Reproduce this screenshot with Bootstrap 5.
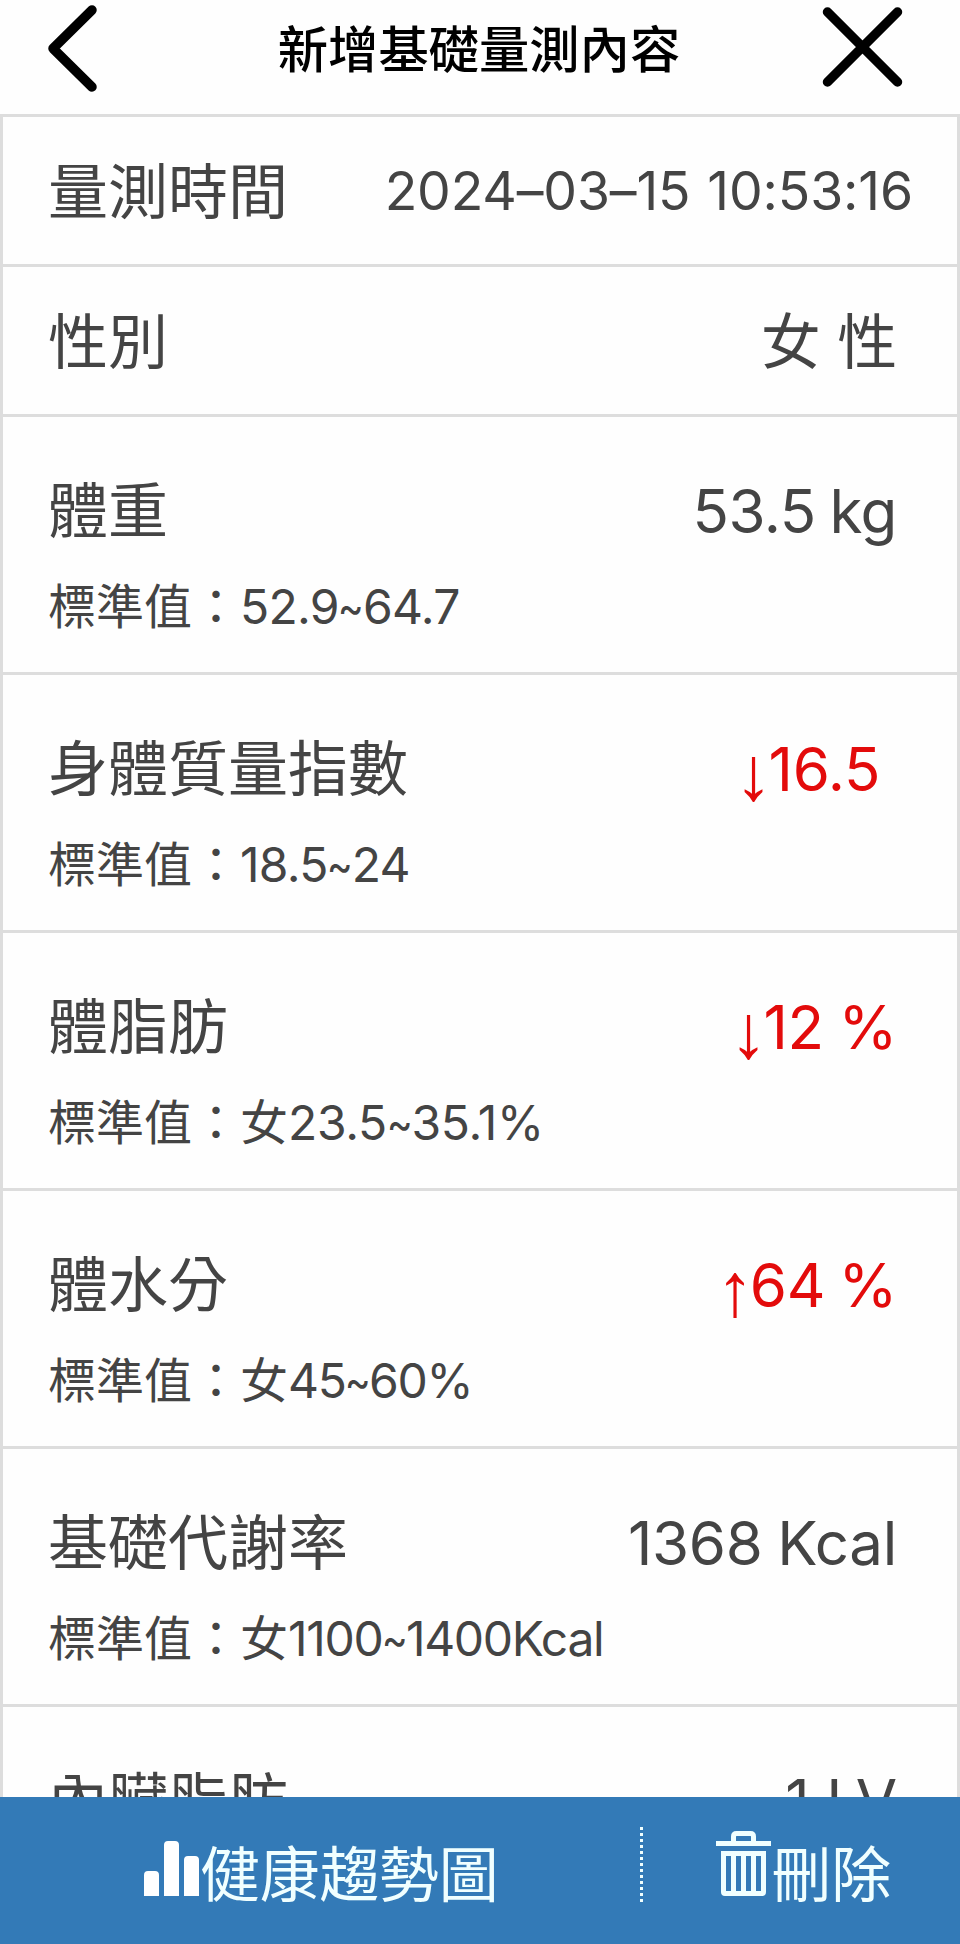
<!DOCTYPE html>
<html lang="zh-Hant">
<head>
<meta charset="utf-8">
<meta name="viewport" content="width=device-width, initial-scale=1">
<title>新增基礎量測內容</title>
<link href="https://cdn.jsdelivr.net/npm/bootstrap@5.3.0/dist/css/bootstrap.min.css" rel="stylesheet">
<style>
  body { font-family: Inter, "Noto Sans CJK TC", sans-serif; color: #444; background: #fefefe; }
  .screen { height: 1944px; }
  .topbar { height: 114px; padding: 0 57px 0 48px; color: #000; }
  .topbar h1 { font-size: 50.3px; font-weight: 500; line-height: 98px; margin-left: 38px; padding-top: 1px; }
  .topbar .btn { line-height: 0; }
  .measures { border: 3px solid #ddd; border-bottom: 0; min-height: 0; }
  .measure { height: 258px; padding: 49px 60px 0 45px; border-bottom: 3px solid #ddd; font-size: 60px; line-height: 90px; white-space: pre; }
  .measure.single { height: 150px; padding-top: 30px; }
  .reading { word-spacing: -2px; letter-spacing: -.3px; }
  .reading.plain { word-spacing: 0; letter-spacing: -.2px; }
  .reading.compact { word-spacing: -3px; letter-spacing: -.4px; }
  .norm { font-size: 48px; line-height: 72px; margin-top: 15px; letter-spacing: -.7px; }
  .norm b { font-weight: 400; letter-spacing: 0; }
  .norm i { display: inline-block; font-style: normal; margin: 0 -3.5px; transform: scaleX(.82); }
  .norm.tight { letter-spacing: -1.3px; }
  .norm.loose { letter-spacing: -.3px; }
  .stamp { font-size: 53.500px; margin-right: -16px; margin-top: -1.5px; word-spacing: 2px; letter-spacing: -.15px; }
  .alert-value { color: #e30b0b; }
  .arrow { font-family: "Liberation Serif", serif; font-size: 76px; line-height: 0; vertical-align: -9px; margin-right: -4px; }
  .actions { height: 147px; background: #337ab7; color: #f0ffff; font-size: 60px; }
  .actions a { color: inherit; line-height: 90px; padding-top: 33px; }
  .actions svg { margin-top: 1px; }
  .actions a span { letter-spacing: -.3px; }
  .trend { width: 640px; padding-left: 144px; }
  .divider { width: 3px; height: 75px; margin-top: 30px; background: repeating-linear-gradient(#f0ffff 0 3px, transparent 3px 6px); }
  .remove { padding-left: 73px; }
  .remove svg { margin-right: -1.5px; }
</style>
</head>
<body>
<div class="screen d-flex flex-column overflow-hidden">
  <header class="topbar d-flex justify-content-between align-items-start flex-shrink-0">
    <button class="btn p-0 border-0" aria-label="返回">
      <svg width="50" height="98" fill="none" stroke="#000" stroke-width="9.5" stroke-linecap="round" stroke-linejoin="round"><path d="M44 10 5 48.5 44 87"/></svg>
    </button>
    <h1 class="mb-0">新增基礎量測內容</h1>
    <button class="btn p-0 border-0" aria-label="關閉">
      <svg width="81" height="98" fill="none" stroke="#000" stroke-width="9.5" stroke-linecap="round"><path d="M5.500 12 75.500 82M75.500 12 5.500 82"/></svg>
    </button>
  </header>

  <main class="measures flex-grow-1 overflow-hidden">
    <section class="measure single d-flex justify-content-between"><span>量測時間</span><span class="stamp">2024–03–15 10:53:16</span></section>
    <section class="measure single d-flex justify-content-between"><span>性別</span><span class="reading plain">女 性</span></section>
    <section class="measure"><div class="d-flex justify-content-between"><span>體重</span><span class="reading compact">53.5 kg</span></div><div class="norm"><b>標準值：</b>52.9<i>~</i>64.7</div></section>
    <section class="measure"><div class="d-flex justify-content-between"><span>身體質量指數</span><span class="reading plain alert-value"><span class="arrow">↓</span>16.5 </span></div><div class="norm"><b>標準值：</b>18.5<i>~</i>24</div></section>
    <section class="measure"><div class="d-flex justify-content-between"><span>體脂肪</span><span class="reading alert-value"><span class="arrow">↓</span>12 %</span></div><div class="norm loose"><b>標準值：女</b>23.5<i>~</i>35.1%</div></section>
    <section class="measure"><div class="d-flex justify-content-between"><span>體水分</span><span class="reading compact alert-value"><span class="arrow">↑</span>64 %</span></div><div class="norm tight"><b>標準值：女</b>45<i>~</i>60%</div></section>
    <section class="measure"><div class="d-flex justify-content-between"><span>基礎代謝率</span><span class="reading">1368 Kcal</span></div><div class="norm tight"><b>標準值：女</b>1100<i>~</i>1400Kcal</div></section>
    <section class="measure"><div class="d-flex justify-content-between"><span>內臟脂肪</span><span class="reading plain">1 LV</span></div></section>
  </main>

  <footer class="actions d-flex align-items-start flex-shrink-0">
    <a href="#" class="trend d-flex align-items-start text-decoration-none">
      <svg width="56" height="66" viewBox="0 -10 56 66" fill="#fff" class="flex-shrink-0"><path d="M0 55V34q0-4 4-4h7q4 0 4 4v21zM20 55V4q0-4 4-4h7q4 0 4 4v51zM40 55V19q0-4 4-4h7q4 0 4 4v36z"/></svg><span>健康趨勢圖</span>
    </a>
    <span class="divider"></span>
    <a href="#" class="remove d-flex align-items-start text-decoration-none">
      <svg width="57" height="66" viewBox="0 0 57 66" class="flex-shrink-0"><path fill="#f0ffff" d="M0 10h55v5H0z"/><path fill="none" stroke="#f0ffff" stroke-width="5" d="M17.500 11V5.500q0-3 3-3h14q3 0 3 3V11"/><path fill="#f0ffff" fill-rule="evenodd" d="M5 20h45v41q0 4-4 4H9q-4 0-4-4zM10 25v35h5V25zm10 0v35h5V25zm10 0v35h5V25zm10 0v35h5V25z"/></svg><span>刪除</span>
    </a>
  </footer>
</div>
<script src="https://cdn.jsdelivr.net/npm/bootstrap@5.3.0/dist/js/bootstrap.bundle.min.js"></script>
</body>
</html>
